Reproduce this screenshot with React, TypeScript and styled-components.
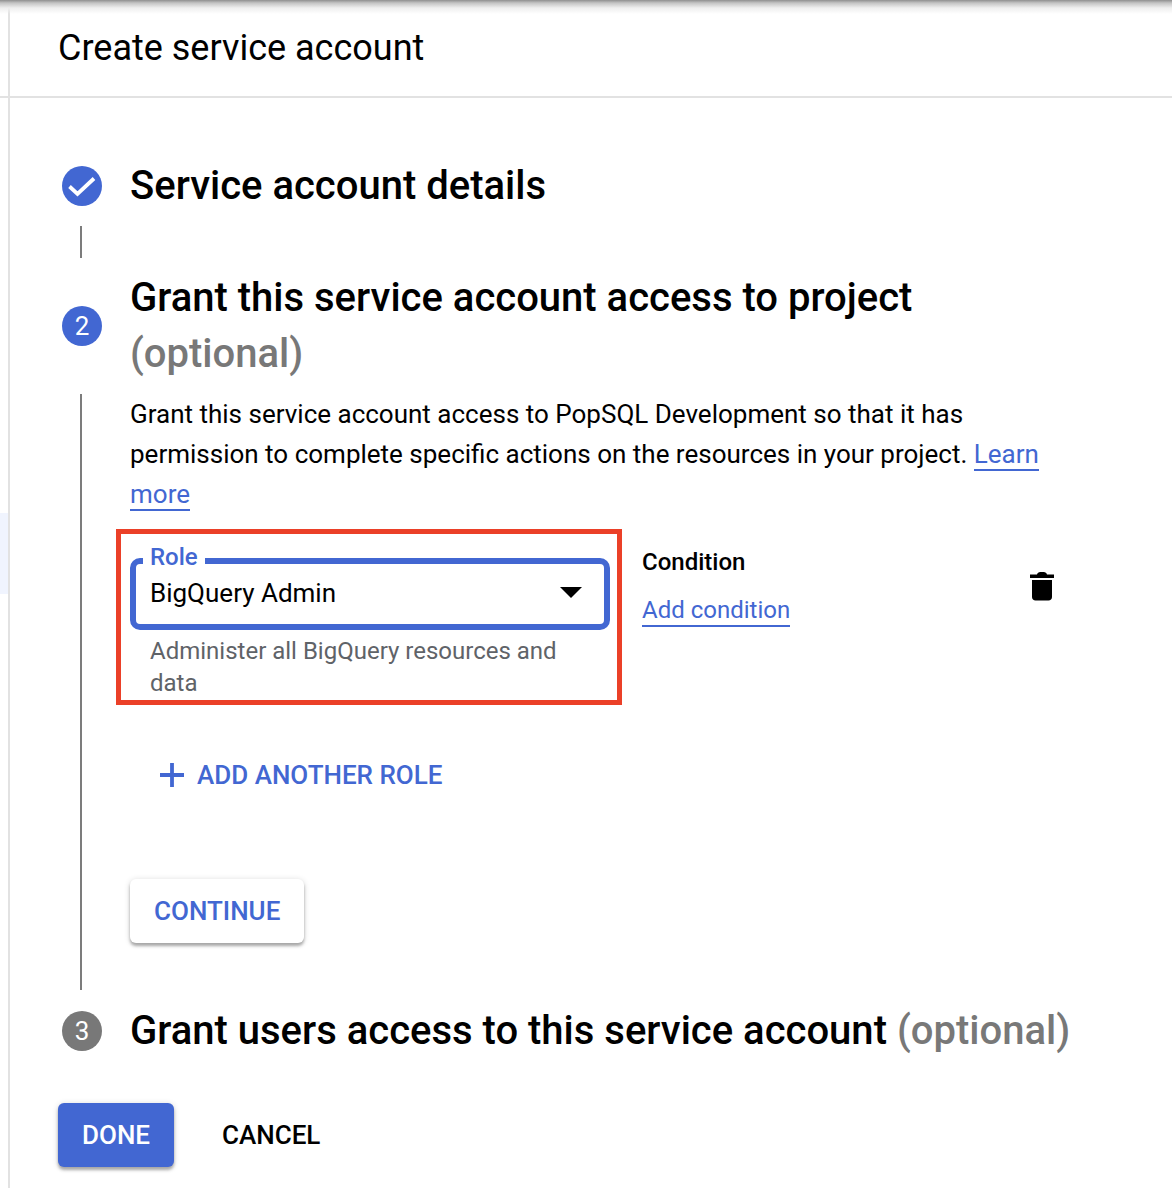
import React from "react";
import styled, { createGlobalStyle } from "styled-components";

const GlobalStyle = createGlobalStyle`
  html, body {
    margin: 0;
    padding: 0;
    background: #fff;
    font-family: Roboto, "Liberation Sans", sans-serif;
    color: #000;
  }
`;

const Page = styled.div`
  width: 1172px;
  height: 1188px;
  overflow: hidden;
  display: flex;
  position: relative;
  background: #fff;

  &::before {
    content: "";
    position: absolute;
    top: 0;
    left: 0;
    right: 0;
    height: 14px;
    background: linear-gradient(#8f8f8f 0, #c4c4c4 3px, #efefef 8px, rgba(255, 255, 255, 0) 14px);
  }
`;

const Rail = styled.div`
  width: 8px;
  flex: none;
  display: flex;
  flex-direction: column;
  border-right: 2px solid #e2e2e2;
`;

const RailLine = styled.div`
  margin-top: 96px;
  height: 2px;
  background: #e2e2e2;
`;

const RailHighlight = styled.div`
  margin-top: 415px;
  height: 81px;
  background: #f0f4fe;
`;

const Panel = styled.main`
  flex: 1;
  min-width: 0;
  display: flex;
  flex-direction: column;
`;

const Header = styled.header`
  height: 98px;
  box-sizing: border-box;
  border-bottom: 2px solid #e2e2e2;
  padding: 26px 0 0 48px;
  font-size: 36px;
  line-height: 44px;
`;

const Steps = styled.div`
  padding: 60px 0 0 52px;
  display: flex;
  flex-direction: column;
`;

const StepHead = styled.div`
  display: flex;
  align-items: center;
  gap: 28px;
`;

const Badge = styled.div<{ $grey?: boolean }>`
  width: 40px;
  height: 40px;
  flex: none;
  border-radius: 50%;
  background: ${(p) => (p.$grey ? "#787878" : "#4267d2")};
  color: #fff;
  font-size: 26px;
  display: flex;
  align-items: center;
  justify-content: center;
`;

const StepTitle = styled.h2`
  margin: 0;
  font-size: 40px;
  line-height: 56px;
  font-weight: 500;
`;

const Optional = styled.span`
  color: #787878;
`;

const ShortLine = styled.div`
  width: 2px;
  height: 32px;
  margin: 12px 0 12px 18px;
  background: #7c7c7c;
`;

const StepBody = styled.section`
  margin: 12px 0 0 18px;
  height: 596px;
  box-sizing: border-box;
  border-left: 2px solid #7c7c7c;
  padding-left: 48px;
  display: flex;
  flex-direction: column;
  align-items: flex-start;
`;

const Intro = styled.p`
  margin: 0;
  width: 930px;
  font-size: 26px;
  line-height: 40px;
`;

const TextLink = styled.a`
  color: #4267d2;
  text-decoration: none;
  border-bottom: 2px solid #4267d2;
`;

const RoleRow = styled.div`
  display: flex;
  align-items: flex-start;
  margin: 15px 0 0 -14px;
`;

const Highlight = styled.div`
  width: 506px;
  height: 176px;
  box-sizing: border-box;
  border: 5px solid #eb4028;
  padding: 24px 7px 0 9px;
`;

const SelectBox = styled.div`
  position: relative;
  height: 72px;
  box-sizing: border-box;
  border: 6px solid #4267d2;
  border-radius: 10px;
  padding: 9px 14px 0;
  display: flex;
  align-items: flex-start;
  justify-content: space-between;
  font-size: 26px;
  line-height: 40px;
`;

const FloatLabel = styled.span`
  position: absolute;
  left: 7px;
  top: -23px;
  padding: 0 7px;
  background: #fff;
  color: #4267d2;
  font-size: 24px;
  line-height: 32px;
  font-weight: 500;
`;

const Caret = styled.span`
  width: 0;
  height: 0;
  margin: 14px 8px 0 0;
  border-left: 11px solid transparent;
  border-right: 11px solid transparent;
  border-top: 11px solid #000;
`;

const Hint = styled.p`
  margin: 5px 0 0;
  padding-left: 20px;
  color: #5f6368;
  font-size: 24px;
  line-height: 32px;
`;

const ConditionCol = styled.div`
  margin: 17px 0 0 20px;
  width: 388px;
  display: flex;
  flex-direction: column;
  align-items: flex-start;
`;

const ConditionLabel = styled.div`
  font-size: 24px;
  line-height: 32px;
  font-weight: 500;
`;

const ConditionLink = styled(TextLink)`
  margin-top: 17px;
  font-size: 24px;
  line-height: 30px;
`;

const IconButton = styled.button`
  margin-top: 42px;
  padding: 0;
  border: 0;
  background: none;
  width: 24px;
  height: 30px;
  display: block;
`;

const AddRole = styled.button`
  margin: 52px 0 0 29px;
  padding: 0;
  border: 0;
  background: none;
  display: flex;
  align-items: center;
  gap: 12px;
  color: #4267d2;
  font-family: inherit;
  font-size: 26px;
  line-height: 36px;
  font-weight: 500;
`;

const Button = styled.button<{ $kind: "raised" | "primary" | "plain" }>`
  height: 64px;
  box-sizing: border-box;
  border: 0;
  border-radius: 6px;
  font-family: inherit;
  font-size: 26px;
  font-weight: 500;
  padding: 0 24px;
  background: ${(p) => (p.$kind === "primary" ? "#4267d2" : p.$kind === "raised" ? "#fff" : "transparent")};
  color: ${(p) => (p.$kind === "primary" ? "#fff" : p.$kind === "raised" ? "#4267d2" : "#000")};
  box-shadow: ${(p) =>
    p.$kind === "plain" ? "none" : "0 3px 3px rgba(0,0,0,.28), 0 1px 6px rgba(0,0,0,.16)"};
`;

const ContinueWrap = styled.div`
  margin-top: 86px;
`;

const LastStep = styled(StepHead)`
  margin-top: 13px;
`;

const Footer = styled.footer`
  margin: 44px 0 0 48px;
  display: flex;
  gap: 24px;
`;

const App = () => {
  return (
    <Page>
      <GlobalStyle />
      <Rail>
        <RailLine />
        <RailHighlight />
      </Rail>
      <Panel>
        <Header>Create service account</Header>
        <Steps>
          <StepHead>
            <Badge>
              <svg width="30" height="30" viewBox="0 0 30 30" aria-hidden="true">
                <path d="M2.500 15.500l8 7.500L27 7.500" fill="none" stroke="#fff" strokeWidth="3.800" />
              </svg>
            </Badge>
            <StepTitle>Service account details</StepTitle>
          </StepHead>
          <ShortLine />
          <StepHead>
            <Badge>2</Badge>
            <StepTitle>
              Grant this service account access to project
              <br />
              <Optional>(optional)</Optional>
            </StepTitle>
          </StepHead>
          <StepBody>
            <Intro>
              Grant this service account access to PopSQL Development so that it has permission to complete
              specific actions on the resources in your project. <TextLink href="#">Learn</TextLink>{" "}
              <TextLink href="#">more</TextLink>
            </Intro>
            <RoleRow>
              <Highlight>
                <SelectBox>
                  <FloatLabel>Role</FloatLabel>
                  BigQuery Admin
                  <Caret />
                </SelectBox>
                <Hint>Administer all BigQuery resources and data</Hint>
              </Highlight>
              <ConditionCol>
                <ConditionLabel>Condition</ConditionLabel>
                <ConditionLink href="#">Add condition</ConditionLink>
              </ConditionCol>
              <IconButton aria-label="Delete">
                <svg width="24" height="30" viewBox="0 0 24 30" aria-hidden="true">
                  <path
                    d="M7 3.500C7.500 1.500 9 1 12 1s4.500 .5 5 2.500h7v3.500H0V3.500zM2 9h20v17c0 2-1.500 3.500-3.500 3.500h-13C3.500 29.500 2 28 2 26z"
                    fill="#000"
                  />
                </svg>
              </IconButton>
            </RoleRow>
            <AddRole>
              <svg width="26" height="26" viewBox="0 0 26 26" aria-hidden="true">
                <path d="M13 1v24M1 13h24" fill="none" stroke="#4267d2" strokeWidth="3.800" />
              </svg>
              ADD ANOTHER ROLE
            </AddRole>
            <ContinueWrap>
              <Button $kind="raised">CONTINUE</Button>
            </ContinueWrap>
          </StepBody>
          <LastStep>
            <Badge $grey>3</Badge>
            <StepTitle>
              Grant users access to this service account <Optional>(optional)</Optional>
            </StepTitle>
          </LastStep>
        </Steps>
        <Footer>
          <Button $kind="primary">DONE</Button>
          <Button $kind="plain">CANCEL</Button>
        </Footer>
      </Panel>
    </Page>
  );
};

export default App;
